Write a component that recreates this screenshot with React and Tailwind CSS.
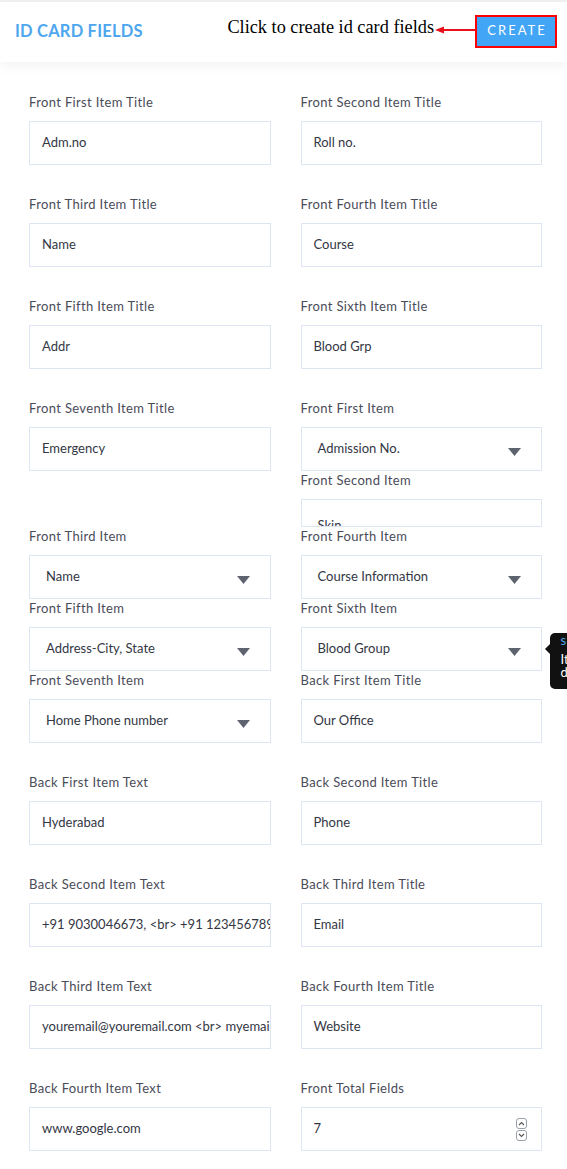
import React from 'react'

const font = { fontFamily: 'Lato, "Open Sans", sans-serif' }

function Label({ children }) {
    return <div className="h-[16px] leading-[16px] text-[13px] tracking-[0.35px] text-[#4a4c58] mb-[11px] whitespace-nowrap">{children}</div>
}

function TextField({ label, value }) {
    return (
        <div className="pb-[31px]">
            <Label>{label}</Label>
            <div className="h-[44px] border border-[#dde5f2] bg-white flex items-center pl-[12px] pr-[4px] overflow-hidden">
                <span className="text-[13px] text-[#333744] whitespace-nowrap">{value}</span>
            </div>
        </div>
    )
}

function Caret() {
    return (
        <svg width="13" height="8" viewBox="0 0 13 8" className="mt-[6px]">
            <path d="M0 0 L13 0 L6.5 8 Z" fill="#5d6470" />
        </svg>
    )
}

function SelectField({ label, value }) {
    return (
        <div className="pb-[1px]">
            <Label>{label}</Label>
            <div className="h-[44px] border border-[#dde5f2] bg-white flex items-center justify-between pl-[16px] pr-[20px]">
                <span className="text-[13px] text-[#333744] whitespace-nowrap">{value}</span>
                <Caret />
            </div>
        </div>
    )
}

function NumberField({ label, value }) {
    return (
        <div className="pb-[17px]">
            <Label>{label}</Label>
            <div className="h-[44px] border border-[#dde5f2] bg-white flex items-center justify-between pl-[12px] pr-[14px]">
                <span className="text-[13px] text-[#333744]">{value}</span>
                <div className="flex flex-col gap-[1px]">
                    <div className="w-[11px] h-[11px] border border-[#9aa0a8] rounded-[3px] flex items-center justify-center">
                        <svg width="7" height="5" viewBox="0 0 7 5"><path d="M1 4 L3.5 1.5 L6 4" stroke="#555" strokeWidth="1.1" fill="none" /></svg>
                    </div>
                    <div className="w-[11px] h-[11px] border border-[#9aa0a8] rounded-[3px] flex items-center justify-center">
                        <svg width="7" height="5" viewBox="0 0 7 5"><path d="M1 1 L3.5 3.5 L6 1" stroke="#555" strokeWidth="1.1" fill="none" /></svg>
                    </div>
                </div>
            </div>
        </div>
    )
}

export default function App() {
    return (
        <div className="w-[567px] h-[1169px] bg-white overflow-hidden relative" style={font}>
            {/* Header */}
            <div className="h-[2px] bg-[#f1f1f1]" />
            <div className="h-[60px] bg-white flex items-center justify-between pl-[15px] pr-[10px] shadow-[0_4px_12px_rgba(0,0,0,0.05)] relative z-10">
                <h1 className="text-[16.5px] font-bold text-[#4ea6ee] tracking-[0.2px] mt-[-2px]">ID CARD FIELDS</h1>
                <div className="flex items-center">
                    <span className="text-[18.3px] text-black mr-[1px] mt-[-9px]" style={{ fontFamily: '"Liberation Serif", serif' }}>Click to create id card fields</span>
                    <svg width="40" height="10" viewBox="0 0 40 10" className="mt-[-4px]">
                        <path d="M8 5 L40 5" stroke="#e8101a" strokeWidth="2" />
                        <path d="M0 5 L9 1.5 L9 8.5 Z" fill="#e8101a" />
                    </svg>
                    <button className="h-[33px] w-[82px] bg-[#42a5f5] border-2 border-[#ff0000] text-white text-[13px] tracking-[2px] flex items-center justify-center mt-[-2px] pl-[2px]">CREATE</button>
                </div>
            </div>

            {/* Form grid */}
            <div className="grid grid-cols-2 gap-x-[30px] pl-[29px] pr-[25px] pt-[32px]">
                <TextField label="Front First Item Title" value="Adm.no" />
                <TextField label="Front Second Item Title" value="Roll no." />
                <TextField label="Front Third Item Title" value="Name" />
                <TextField label="Front Fourth Item Title" value="Course" />
                <TextField label="Front Fifth Item Title" value="Addr" />
                <TextField label="Front Sixth Item Title" value="Blood Grp" />
                <TextField label="Front Seventh Item Title" value="Emergency" />
                <div className="h-[128px] overflow-hidden">
                    <SelectField label="Front First Item" value="Admission No." />
                    <Label>Front Second Item</Label>
                    <div className="h-[28px] border border-[#dde5f2] bg-white overflow-hidden pl-[16px] pt-[12px]">
                        <span className="text-[13px] text-[#333744]">Skin</span>
                    </div>
                </div>
                <SelectField label="Front Third Item" value="Name" />
                <SelectField label="Front Fourth Item" value="Course Information" />
                <SelectField label="Front Fifth Item" value="Address-City, State" />
                <div className="relative">
                    <SelectField label="Front Sixth Item" value="Blood Group" />
                    <div className="absolute left-[249px] top-[33px] w-[60px] h-[56px] bg-[#111] rounded-[5px] text-white text-[13px] leading-[13px] pl-[11px] pt-[1px]">
                        <div className="absolute left-[-5px] top-[11px] w-0 h-0 border-y-[5px] border-y-transparent border-r-[5px] border-r-[#111]" />
                        <div className="text-[#4ea6ee] mb-[6px]">s</div>
                        <div>It</div>
                        <div>d</div>
                    </div>
                </div>
                <SelectField label="Front Seventh Item" value="Home Phone number" />
                <TextField label="Back First Item Title" value="Our Office" />
                <TextField label="Back First Item Text" value="Hyderabad" />
                <TextField label="Back Second Item Title" value="Phone" />
                <TextField label="Back Second Item Text" value="+91 9030046673, <br> +91 1234567890" />
                <TextField label="Back Third Item Title" value="Email" />
                <TextField label="Back Third Item Text" value="youremail@youremail.com <br> myemail@myemail.com" />
                <TextField label="Back Fourth Item Title" value="Website" />
                <TextField label="Back Fourth Item Text" value="www.google.com" />
                <NumberField label="Front Total Fields" value="7" />
            </div>
        </div>
    )
}
